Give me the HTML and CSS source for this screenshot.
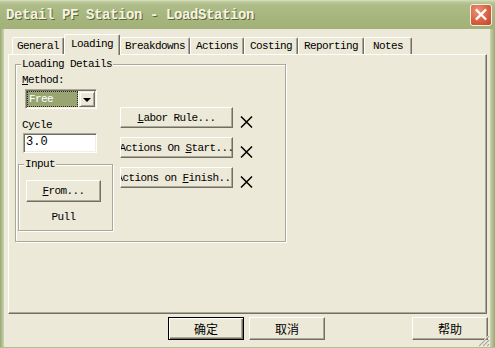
FILE: index.html
```html
<!DOCTYPE html>
<html>
<head>
<meta charset="utf-8">
<link rel="stylesheet" href="styles.css">
</head>
<body>
<div class="window">
  <div class="titlebar">
    <span class="title">Detail PF Station - LoadStation</span>
    <div class="close">
      <svg width="21" height="21" viewBox="0 0 21 21"><path d="M6 6 L15 15 M15 6 L6 15" stroke="#fff" stroke-width="2.4" stroke-linecap="square"/></svg>
    </div>
  </div>
  <div class="frame">
    <div class="edge edge-l"></div>
    <div class="client">
      <div class="tabs">
        <div class="tab w-general">General</div>
        <div class="tab tab-active w-loading">Loading</div>
        <div class="tab w-breakdowns">Breakdowns</div>
        <div class="tab w-actions">Actions</div>
        <div class="tab w-costing">Costing</div>
        <div class="tab w-reporting">Reporting</div>
        <div class="tab w-notes">Notes</div>
      </div>
      <div class="panel">
        <div class="group group-main">
          <span class="group-label">Loading Details</span>
          <div class="col-left">
            <div class="lbl lbl-method"><u>M</u>ethod:</div>
            <div class="select">
              <div class="select-value">Free</div>
              <div class="select-arrow"><span class="tri"></span></div>
            </div>
            <div class="lbl lbl-cycle">Cycle</div>
            <div class="textbox">3.0</div>
            <div class="group group-input">
              <span class="group-label">Input</span>
              <div class="btn btn-from"><span><u>F</u>rom...</span></div>
              <div class="pull">Pull</div>
            </div>
          </div>
          <div class="col-right">
            <div class="action-row">
              <div class="btn btn-action"><span><u>L</u>abor Rule...</span></div>
              <svg class="x-mark" width="13" height="12" viewBox="0 0 13 12"><path d="M1 0.5 L12 11.5 M12 0.5 L1 11.5" stroke="#000" stroke-width="1.5"/></svg>
            </div>
            <div class="action-row">
              <div class="btn btn-action"><span>Actions On <u>S</u>tart...</span></div>
              <svg class="x-mark" width="13" height="12" viewBox="0 0 13 12"><path d="M1 0.5 L12 11.5 M12 0.5 L1 11.5" stroke="#000" stroke-width="1.5"/></svg>
            </div>
            <div class="action-row">
              <div class="btn btn-action"><span>Actions on <u>F</u>inish...</span></div>
              <svg class="x-mark" width="13" height="12" viewBox="0 0 13 12"><path d="M1 0.5 L12 11.5 M12 0.5 L1 11.5" stroke="#000" stroke-width="1.5"/></svg>
            </div>
          </div>
        </div>
      </div>
      <div class="footer">
        <div class="btn btn-dlg btn-default">确定</div>
        <div class="btn btn-dlg btn-cancel">取消</div>
        <div class="btn btn-dlg btn-help">帮助</div>
      </div>
    </div>
    <div class="edge edge-r"></div>
  </div>
  <div class="edge-b"></div>
  <svg class="grip" width="13" height="13" viewBox="0 0 13 13">
    <path d="M12 1 L1 12 M12 5 L5 12 M12 9 L9 12" stroke="#fff" stroke-width="1"/>
    <path d="M12 2 L2 12 M12 6 L6 12 M12 10 L10 12" stroke="#ACA899" stroke-width="1.2"/>
  </svg>
</div>
</body>
</html>
```

FILE: styles.css
```css
* { box-sizing: border-box; }

body {
  margin: 0;
  width: 495px;
  height: 348px;
  overflow: hidden;
  background: #ECE9D8;
  font-family: "Liberation Mono", "DejaVu Sans Mono", monospace;
  font-size: 11px;
  letter-spacing: -0.6px;
  color: #000;
}

.window {
  position: relative;
  display: flex;
  flex-direction: column;
  width: 495px;
  height: 348px;
}

.titlebar {
  height: 29px;
  flex: none;
  display: flex;
  align-items: center;
  justify-content: space-between;
  padding: 0 3px 0 6px;
  background: linear-gradient(to bottom, #D9E0C0 0px, #BCC899 2px, #AEBC88 5px, #A7B67E 55%, #A2B178 100%);
}

.title {
  font-family: "Liberation Mono", monospace;
  font-weight: bold;
  font-size: 14px;
  letter-spacing: -0.4px;
  color: #F6F3E2;
  text-shadow: 1px 1px 0 #5A6636;
  padding-top: 1px;
}

.close {
  width: 22px;
  height: 22px;
  border: 1px solid #F4F2E8;
  border-radius: 3px;
  background: radial-gradient(circle at 35% 30%, #EC9478 0%, #D9603F 55%, #BE4526 100%);
  display: flex;
  align-items: center;
  justify-content: center;
}

.close svg { display: block; }

.frame {
  flex: 1;
  display: flex;
  min-height: 0;
}

.edge { flex: none; }
.edge-l {
  width: 4px;
  background: linear-gradient(to right, #98A872, #B0BE90 50%, #CBD4B0);
}
.edge-r {
  width: 5px;
  background: linear-gradient(to left, #98A872, #B0BE90 50%, #CBD4B0);
}
.edge-b {
  height: 1px;
  flex: none;
  background: #B0BE90;
}

.client {
  flex: 1;
  display: flex;
  flex-direction: column;
  padding: 5px 0 0 4px;
}

/* Tabs */
.tabs {
  display: flex;
  align-items: flex-end;
  height: 21px;
  margin: 0 0 -1px 4px;
  position: relative;
  z-index: 1;
}

.tab {
  height: 17px;
  margin-bottom: 1px;
  border-top: 1px solid #fff;
  border-left: 1px solid #fff;
  border-right: 1px solid #716F64;
  box-shadow: inset -1px 0 0 #ACA899;
  border-radius: 2px 2px 0 0;
  text-align: center;
  line-height: 16px;
  white-space: nowrap;
  background: #ECE9D8;
}

.tab-active {
  height: 21px;
  margin-bottom: 0;
  padding-top: 1px;
}

.w-general { width: 52px; }
.w-loading { width: 56px; }
.w-breakdowns { width: 70px; }
.w-actions { width: 54px; }
.w-costing { width: 54px; }
.w-reporting { width: 66px; }
.w-notes { width: 48px; }

/* Panel */
.panel {
  width: 479px;
  height: 260px;
  flex: none;
  border: 1px solid;
  border-color: #fff #716F64 #716F64 #fff;
  box-shadow: inset -1px -1px 0 #ACA899;
}

.group {
  position: relative;
  border: 1px solid #ACA899;
  box-shadow: 1px 1px 0 #fff, inset 1px 1px 0 #fff;
}

.group-label {
  position: absolute;
  top: -7px;
  left: 5px;
  padding: 0 1px;
  line-height: 12px;
  background: #ECE9D8;
  white-space: nowrap;
}

.group-main {
  width: 271px;
  height: 178px;
  margin: 9px 0 0 6px;
  display: flex;
}

.col-left {
  width: 104px;
  flex: none;
  display: flex;
  flex-direction: column;
  align-items: flex-start;
}

.lbl { line-height: 12px; white-space: nowrap; }
.lbl-method { margin: 9px 0 0 6px; }
.lbl-cycle { margin: 10px 0 0 6px; }

.select {
  width: 72px;
  height: 20px;
  margin: 3px 0 0 9px;
  border: 1px solid;
  border-color: #ACA899 #fff #fff #ACA899;
  box-shadow: inset 1px 1px 0 #716F64, inset -1px -1px 0 #F1EFE2;
  background: #fff;
  display: flex;
  padding: 1px;
}

.select-value {
  flex: 1;
  background: #98A572;
  color: #fff;
  border: 1px dotted #2A2E18;
  line-height: 14px;
  padding-left: 1px;
  margin-right: 1px;
}

.select-arrow {
  width: 16px;
  border: 1px solid;
  border-color: #F1EFE2 #716F64 #716F64 #F1EFE2;
  box-shadow: inset 1px 1px 0 #fff, inset -1px -1px 0 #ACA899;
  background: #ECE9D8;
  display: flex;
  align-items: center;
  justify-content: center;
}

.tri {
  width: 0;
  height: 0;
  border-left: 4px solid transparent;
  border-right: 4px solid transparent;
  border-top: 4px solid #000;
  margin-top: 1px;
}

.textbox {
  width: 74px;
  height: 20px;
  margin: 2px 0 0 7px;
  border: 1px solid;
  border-color: #ACA899 #fff #fff #ACA899;
  box-shadow: inset 1px 1px 0 #716F64, inset -1px -1px 0 #F1EFE2;
  background: #fff;
  font-size: 12px;
  letter-spacing: 0;
  line-height: 17px;
  padding-left: 2px;
}

.group-input {
  width: 95px;
  height: 67px;
  margin: 11px 0 0 2px;
}

.btn {
  background: #ECE9D8;
  border: 1px solid;
  border-color: #fff #716F64 #716F64 #fff;
  box-shadow: inset -1px -1px 0 #ACA899;
  display: flex;
  align-items: center;
  justify-content: center;
  overflow: hidden;
  white-space: nowrap;
  line-height: 12px;
}

.btn > span { flex: none; }

.btn-from {
  width: 75px;
  height: 22px;
  margin: 15px 0 0 7px;
}

.pull {
  width: 75px;
  margin: 9px 0 0 7px;
  text-align: center;
  line-height: 12px;
}

.col-right {
  margin-top: 42px;
  display: flex;
  flex-direction: column;
  gap: 9px;
}

.action-row {
  display: flex;
  align-items: flex-start;
}

.btn-action {
  width: 113px;
  height: 21px;
  padding: 0 2px;
}

.x-mark {
  display: block;
  margin: 9px 0 0 7px;
}

/* Footer */
.footer {
  display: flex;
  justify-content: flex-end;
  margin-top: 3px;
  padding-right: 2px;
}

.btn-dlg {
  width: 76px;
  height: 23px;
  font-family: "Noto Sans CJK SC", sans-serif;
  font-size: 12px;
  letter-spacing: 0;
  padding-top: 1px;
}

.btn-default {
  border: 1px solid #000;
  box-shadow: inset 1px 1px 0 #fff, inset -1px -1px 0 #716F64, inset -2px -2px 0 #ACA899;
}

.btn-cancel { margin-left: 5px; }
.btn-help { margin-left: 87px; }

.grip {
  position: absolute;
  right: 5px;
  bottom: 1px;
}
```
